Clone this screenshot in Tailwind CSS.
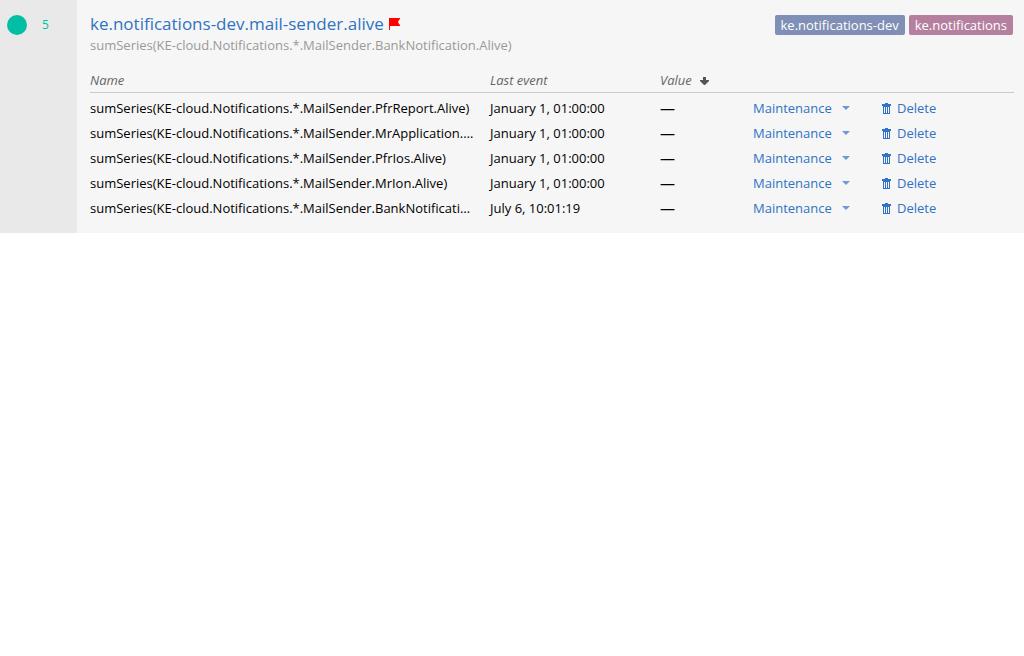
<!DOCTYPE html>
<html lang="en">
<head>
<meta charset="utf-8">
<meta name="viewport" content="width=device-width, initial-scale=1">
<title>ke.notifications-dev.mail-sender.alive</title>
<script src="https://cdn.jsdelivr.net/npm/@tailwindcss/browser@4"></script>
</head>
<body class="bg-white font-['Open_Sans','Noto_Sans',sans-serif] text-[13px] leading-5 text-black">
<svg class="hidden" aria-hidden="true">
  <symbol id="trash" viewBox="0 0 9 11">
    <path fill="currentColor" fill-rule="evenodd" d="M3 0h3v1h3v2H0V1h3zM1 3h7v8H1zM2 4v6h1V4zM4 4v6h1V4zM6 4v6h1V4z"/>
  </symbol>
  <symbol id="caret" viewBox="0 0 8 4"><path fill="currentColor" d="M0 0h8L4 4z"/></symbol>
</svg>
<main class="flex bg-[#f6f6f6]">
  <div class="flex w-[77px] shrink-0 gap-[15px] bg-[#e9e9e9] pt-[15px] pl-[7px] text-[#00bfa5]">
    <span class="size-5 rounded-full bg-[#00bfa5]"></span>
    <span class="text-xs leading-5">5</span>
  </div>
  <section class="min-w-0 grow pt-3 pr-2.5 pb-3 pl-[13px]">
    <header class="flex items-start justify-between">
      <div>
        <h1 class="flex items-center gap-[5px] text-[17px] leading-6 text-[#3072c4]">
          <a href="#">ke.notifications-dev.mail-sender.alive</a>
          <svg class="h-3 w-[11px]" viewBox="0 0 11 12" role="img" aria-label="Flagged"><path fill="#f00" d="M0 0h11v1l-1 1-1 2 1 2 1 1v1H1v4H0z"/></svg>
        </h1>
        <p class="leading-[18px] text-[#999]">sumSeries(KE-cloud.Notifications.*.MailSender.BankNotification.Alive)</p>
      </div>
      <div class="flex gap-1 pt-[3px] pr-px text-white">
        <a href="#" class="rounded-xs bg-[#7f8fb5] px-1.5">ke.notifications-dev</a>
        <a href="#" class="rounded-xs bg-[#b5809f] px-1.5">ke.notifications</a>
      </div>
    </header>
    <table class="mt-4 w-full table-fixed text-left">
      <colgroup>
        <col class="w-[400px]"><col class="w-[170px]"><col class="w-[93px]"><col class="w-[129px]"><col>
      </colgroup>
      <thead class="border-b border-[#ccc] text-[#666] italic">
        <tr>
          <th class="pb-0.5 font-normal">Name</th>
          <th class="pb-0.5 font-normal">Last event</th>
          <th class="pb-0.5 font-normal"><button type="button" class="flex items-center gap-2 italic">Value <svg class="mt-0.5 h-2 w-[9px]" viewBox="0 0 9 8" aria-hidden="true"><path fill="#555" d="M3 0h3v3h3v1L5 8H4L0 4V3h3z"/></svg></button></th>
          <th colspan="2"></th>
        </tr>
      </thead>
      <tbody>
        <tr><td colspan="5" class="h-[3px]"></td></tr>
        <tr class="h-[25px]">
          <td class="truncate pr-3.5">sumSeries(KE-cloud.Notifications.*.MailSender.PfrReport.Alive)</td>
          <td>January 1, 01:00:00</td><td class="text-[15px] leading-5">—</td>
          <td><button type="button" class="flex items-center gap-2.5 text-[#3072c4]">Maintenance <svg class="h-1 w-2 text-[#6a9bd8]"><use href="#caret"/></svg></button></td>
          <td><button type="button" class="flex items-center gap-1.5 text-[#3072c4]"><svg class="h-[11px] w-[9px]"><use href="#trash"/></svg>Delete</button></td>
        </tr>
        <tr class="h-[25px]">
          <td class="truncate pr-3.5">sumSeries(KE-cloud.Notifications.*.MailSender.MrApplication.Alive)</td>
          <td>January 1, 01:00:00</td><td class="text-[15px] leading-5">—</td>
          <td><button type="button" class="flex items-center gap-2.5 text-[#3072c4]">Maintenance <svg class="h-1 w-2 text-[#6a9bd8]"><use href="#caret"/></svg></button></td>
          <td><button type="button" class="flex items-center gap-1.5 text-[#3072c4]"><svg class="h-[11px] w-[9px]"><use href="#trash"/></svg>Delete</button></td>
        </tr>
        <tr class="h-[25px]">
          <td class="truncate pr-3.5">sumSeries(KE-cloud.Notifications.*.MailSender.PfrIos.Alive)</td>
          <td>January 1, 01:00:00</td><td class="text-[15px] leading-5">—</td>
          <td><button type="button" class="flex items-center gap-2.5 text-[#3072c4]">Maintenance <svg class="h-1 w-2 text-[#6a9bd8]"><use href="#caret"/></svg></button></td>
          <td><button type="button" class="flex items-center gap-1.5 text-[#3072c4]"><svg class="h-[11px] w-[9px]"><use href="#trash"/></svg>Delete</button></td>
        </tr>
        <tr class="h-[25px]">
          <td class="truncate pr-3.5">sumSeries(KE-cloud.Notifications.*.MailSender.MrIon.Alive)</td>
          <td>January 1, 01:00:00</td><td class="text-[15px] leading-5">—</td>
          <td><button type="button" class="flex items-center gap-2.5 text-[#3072c4]">Maintenance <svg class="h-1 w-2 text-[#6a9bd8]"><use href="#caret"/></svg></button></td>
          <td><button type="button" class="flex items-center gap-1.5 text-[#3072c4]"><svg class="h-[11px] w-[9px]"><use href="#trash"/></svg>Delete</button></td>
        </tr>
        <tr class="h-[25px]">
          <td class="truncate pr-3.5">sumSeries(KE-cloud.Notifications.*.MailSender.BankNotification.Alive)</td>
          <td>July 6, 10:01:19</td><td class="text-[15px] leading-5">—</td>
          <td><button type="button" class="flex items-center gap-2.5 text-[#3072c4]">Maintenance <svg class="h-1 w-2 text-[#6a9bd8]"><use href="#caret"/></svg></button></td>
          <td><button type="button" class="flex items-center gap-1.5 text-[#3072c4]"><svg class="h-[11px] w-[9px]"><use href="#trash"/></svg>Delete</button></td>
        </tr>
      </tbody>
    </table>
  </section>
</main>
</body>
</html>
